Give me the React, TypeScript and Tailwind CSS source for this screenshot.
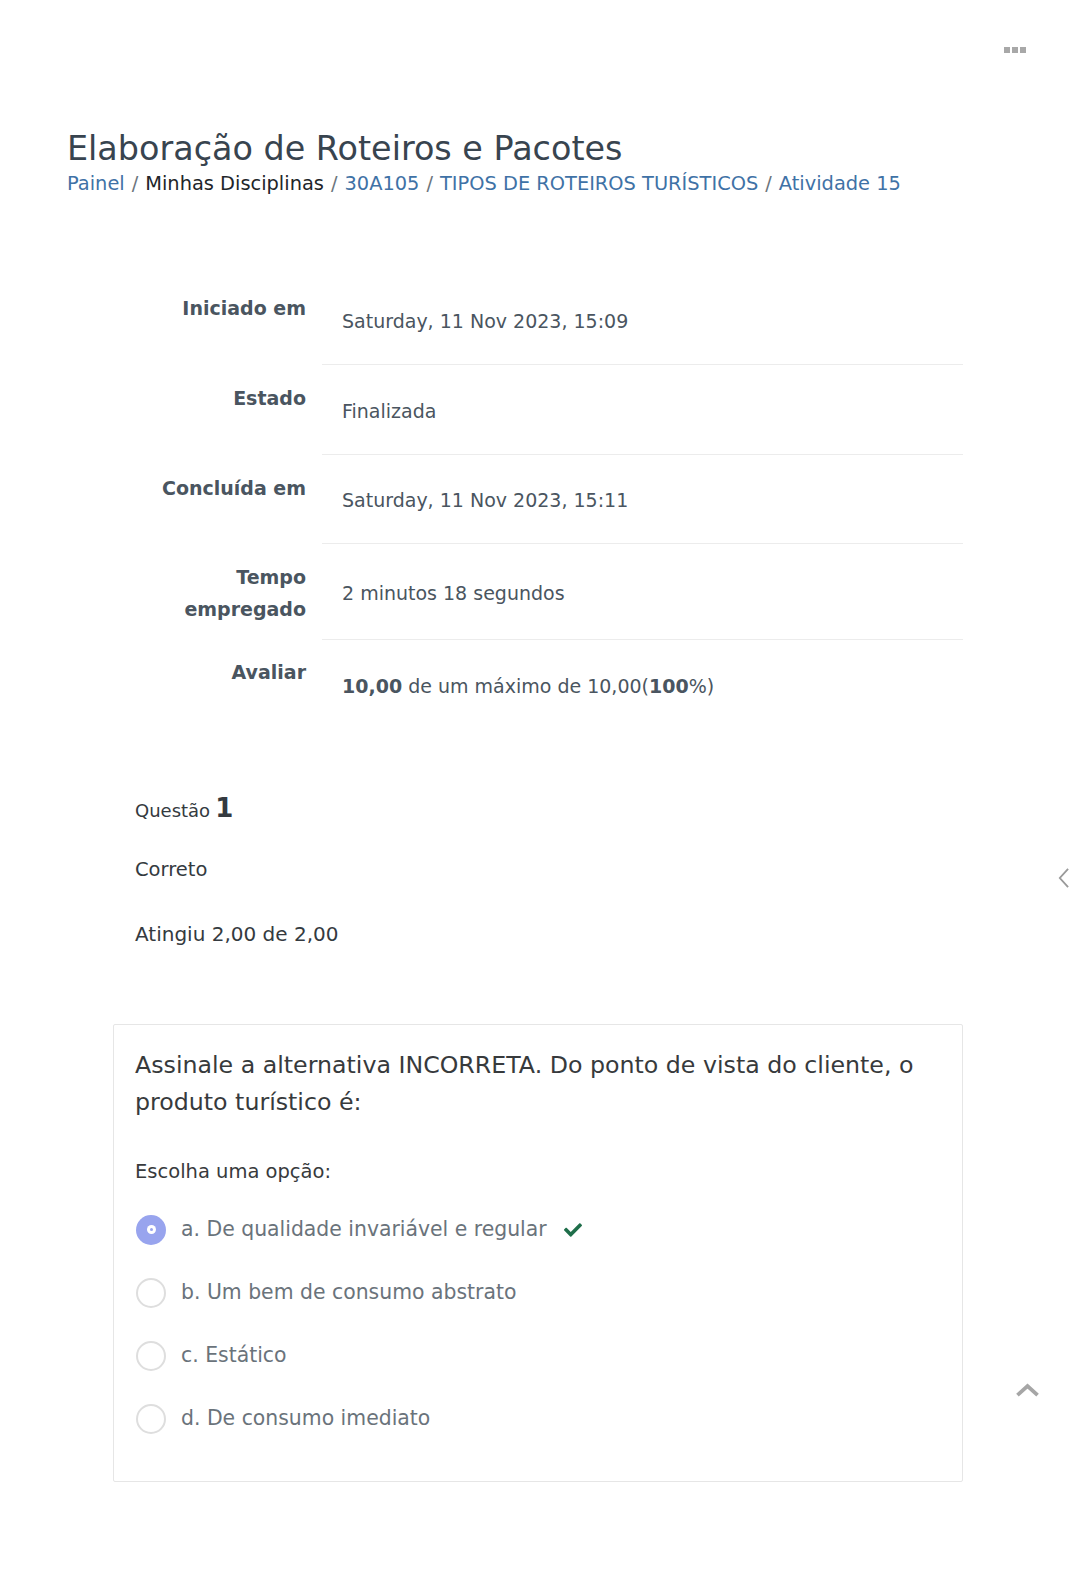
import React from 'react';

const font = { fontFamily: '"DejaVu Sans", sans-serif' };

const rows = [
  { label: ['Iniciado em'], value: 'Saturday, 11 Nov 2023, 15:09', h: 'h-[90px]' },
  { label: ['Estado'], value: 'Finalizada', h: 'h-[90px]' },
  { label: ['Concluída em'], value: 'Saturday, 11 Nov 2023, 15:11', h: 'h-[89px]' },
  { label: ['Tempo', 'empregado'], value: '2 minutos 18 segundos', h: 'h-[96px]' },
];

const options = [
  'a. De qualidade invariável e regular',
  'b. Um bem de consumo abstrato',
  'c. Estático',
  'd. De consumo imediato',
];

const App: React.FC = () => {
  return (
    <div className="relative min-h-[1573px] w-full bg-white text-[#373a3c]" style={font}>
      {/* Top bar */}
      <div className="flex h-[100px] items-start justify-end pr-[53px] pt-[47px]">
        <div className="flex gap-[2px]">
          <span className="h-[6px] w-[6px] bg-[#a8a8a8]"></span>
          <span className="h-[6px] w-[6px] bg-[#a8a8a8]"></span>
          <span className="h-[6px] w-[6px] bg-[#a8a8a8]"></span>
        </div>
      </div>

      {/* Header */}
      <div className="px-[67px] pt-[29px]">
        <h1 className="text-[33.4px] leading-[40px] text-[#38444f]">Elaboração de Roteiros e Pacotes</h1>
        <nav className="mt-[1px] flex items-center gap-[7px] text-[19.4px] leading-[28px]">
          <a className="text-[#3f72a6]">Painel</a>
          <span className="text-[#6c757d]">/</span>
          <span className="text-[#212529]">Minhas Disciplinas</span>
          <span className="text-[#6c757d]">/</span>
          <a className="text-[#3f72a6]">30A105</a>
          <span className="text-[#6c757d]">/</span>
          <a className="text-[#3f72a6]">TIPOS DE ROTEIROS TURÍSTICOS</a>
          <span className="text-[#6c757d]">/</span>
          <a className="text-[#3f72a6]">Atividade 15</a>
        </nav>
      </div>

      {/* Summary table */}
      <div className="mx-[113px] mt-[77px] w-[850px] text-[19px] text-[#4a5560]">
        {rows.map((r, i) => (
          <div key={i} className={`flex ${r.h}`}>
            <div className="w-[209px] shrink-0 pr-[16px] pt-[17px] text-right font-bold leading-[32px]">
              {r.label.map((l) => (
                <div key={l}>{l}</div>
              ))}
            </div>
            <div className="flex flex-1 items-center border-b border-[#ececec] pl-[20px] pt-[3px]">{r.value}</div>
          </div>
        ))}
        <div className="flex h-[90px]">
          <div className="w-[209px] shrink-0 pr-[16px] pt-[16px] text-right font-bold leading-[32px]">Avaliar</div>
          <div className="flex flex-1 items-center pl-[20px] pt-[2px]">
            <span>
              <b>10,00</b> de um máximo de 10,00(<b>100</b>%)
            </span>
          </div>
        </div>
      </div>

      {/* Question info */}
      <div className="mx-[135px] mt-[65px] text-[#343a40]">
        <div className="flex items-baseline gap-[5px]">
          <span className="text-[18px]">Questão</span>
          <span className="text-[26px] font-bold leading-none">1</span>
        </div>
        <div className="mt-[31px] text-[19.5px]">Correto</div>
        <div className="mt-[35px] text-[20px]">Atingiu 2,00 de 2,00</div>
      </div>

      {/* Question card */}
      <div className="mx-[113px] mt-[75px] w-[850px] rounded-[2px] border border-[#e6e6e6] px-[21px] pb-[47px] pt-[22px] text-[#373a3c]">
        <p className="text-[23.7px] leading-[37px]">
          Assinale a alternativa INCORRETA. Do ponto de vista do cliente, o produto turístico é:
        </p>
        <div className="mt-[36px] text-[19.5px]">Escolha uma opção:</div>
        <div className="mt-[28px] flex flex-col gap-[33px] text-[20.4px] text-[#6a737b]">
          {options.map((o, i) => (
            <div key={o} className="flex h-[30px] items-center gap-[15px] pl-[1px]">
              {i === 0 ? (
                <span className="flex h-[30px] w-[30px] items-center justify-center rounded-full bg-[#98a4ee]">
                  <span className="flex h-[9px] w-[9px] items-center justify-center rounded-full bg-white">
                    <span className="h-[3px] w-[3px] rounded-full bg-[#98a4ee]"></span>
                  </span>
                </span>
              ) : (
                <span className="h-[30px] w-[30px] rounded-full border-2 border-[#dedede] bg-white"></span>
              )}
              <span>{o}</span>
              {i === 0 && (
                <svg viewBox="0 0 512 512" className="ml-[2px] h-[18px] w-[18px] fill-[#1f6e4a]">
                  <path d="M173.9 439.4l-166.4-166.4c-10-10-10-26.2 0-36.2l36.2-36.2c10-10 26.2-10 36.2 0L192 312.7 432.1 72.6c10-10 26.2-10 36.2 0l36.2 36.2c10 10 10 26.2 0 36.2l-294.4 294.4c-10 10-26.2 10-36.2 0z" />
                </svg>
              )}
            </div>
          ))}
        </div>
      </div>

      {/* Side chevron */}
      <svg viewBox="0 0 14 24" className="absolute left-[1057px] top-[867px] h-[22px] w-[13px]" fill="none" stroke="#9a9a9a" strokeWidth="2">
        <path d="M12 2 L3 12 L12 22" />
      </svg>

      {/* Back to top */}
      <svg viewBox="0 0 24 14" className="absolute left-[1016px] top-[1383px] h-[14px] w-[23px]" fill="none" stroke="#a6a6a6" strokeWidth="4" strokeLinecap="square">
        <path d="M3 11 L12 3 L21 11" />
      </svg>
    </div>
  );
};

export default App;
